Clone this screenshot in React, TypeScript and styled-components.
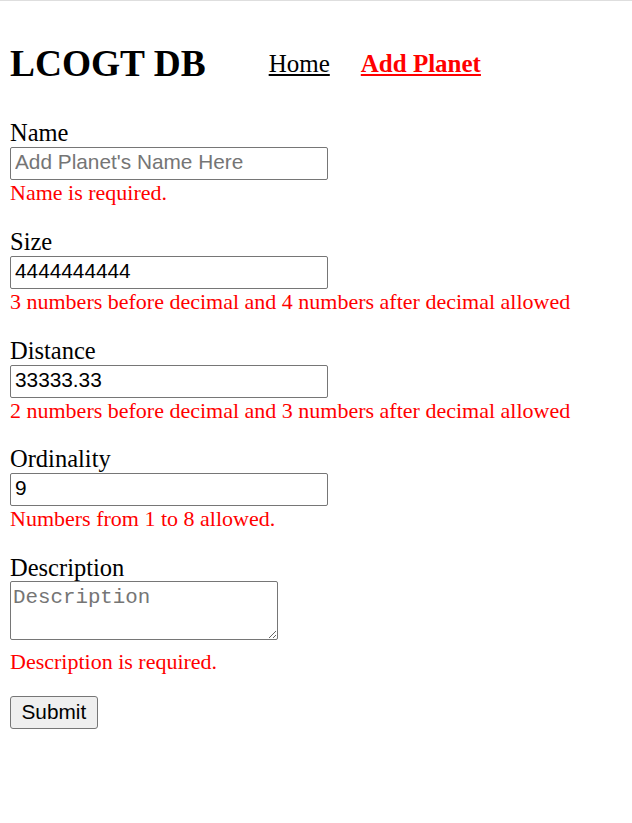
import React from "react";
import styled, { createGlobalStyle } from "styled-components";

const GlobalStyle = createGlobalStyle`
  html, body {
    margin: 0;
    padding: 0;
    background: #ffffff;
  }
  body {
    font-family: "Liberation Serif", "Times New Roman", serif;
    color: #000000;
  }
`;

const Page = styled.div`
  border-top: 1px solid #dedede;
  padding: 0 10px 40px;
`;

const Header = styled.header`
  display: flex;
  align-items: center;
  gap: 63px;
  padding-top: 42px;
`;

const Title = styled.h1`
  margin: 0;
  font-size: 37.4px;
  line-height: 42px;
  font-weight: 700;
`;

const Nav = styled.nav`
  display: flex;
  align-items: center;
  gap: 31px;
`;

const NavLink = styled.a<{ $active?: boolean }>`
  font-size: 25px;
  line-height: 30px;
  color: ${(p) => (p.$active ? "#ff0000" : "#000000")};
  font-weight: ${(p) => (p.$active ? 700 : 400)};
  text-decoration: underline;
  cursor: pointer;
`;

const Form = styled.form`
  display: flex;
  flex-direction: column;
  align-items: flex-start;
  gap: 20.2px;
  margin-top: 33px;
`;

const Field = styled.div`
  display: flex;
  flex-direction: column;
  align-items: flex-start;
`;

const Label = styled.label`
  font-size: 24.5px;
  line-height: 29px;
`;

const TextInput = styled.input`
  box-sizing: border-box;
  width: 318px;
  height: 33px;
  margin: 0;
  padding: 0 4px 3px;
  border: 1px solid #767676;
  border-radius: 2px;
  background: #ffffff;
  color: #000000;
  font-family: "Liberation Sans", Arial, sans-serif;
  font-size: 20.8px;
  outline: none;
  &::placeholder {
    color: #757575;
  }
`;

const TextArea = styled.textarea`
  box-sizing: border-box;
  display: block;
  width: 268px;
  height: 59px;
  margin: -1px 0 9px;
  padding: 4px 2px;
  border: 1px solid #767676;
  border-radius: 2px;
  background: #ffffff;
  color: #000000;
  font-family: "Liberation Mono", "Courier New", monospace;
  font-size: 20.8px;
  outline: none;
  &::placeholder {
    color: #757575;
  }
`;

const ErrorText = styled.div`
  color: #ff0000;
  font-size: 22px;
  line-height: 26.6px;
`;

const SubmitButton = styled.button`
  box-sizing: border-box;
  height: 33px;
  margin: 0;
  padding: 0 10.5px;
  border: 1px solid #767676;
  border-radius: 3px;
  background: #efefef;
  color: #000000;
  font-family: "Liberation Sans", Arial, sans-serif;
  font-size: 20.8px;
  cursor: pointer;
`;

type FieldDef = {
  id: string;
  label: string;
  placeholder?: string;
  value?: string;
  error: string;
};

const fields: FieldDef[] = [
  { id: "name", label: "Name", placeholder: "Add Planet's Name Here", error: "Name is required." },
  { id: "size", label: "Size", value: "4444444444", error: "3 numbers before decimal and 4 numbers after decimal allowed" },
  { id: "distance", label: "Distance", value: "33333.33", error: "2 numbers before decimal and 3 numbers after decimal allowed" },
  { id: "ordinality", label: "Ordinality", value: "9", error: "Numbers from 1 to 8 allowed." },
];

export default function App() {
  return (
    <>
      <GlobalStyle />
      <Page>
        <Header>
          <Title>LCOGT DB</Title>
          <Nav>
            <NavLink href="#">Home</NavLink>
            <NavLink href="#" $active>
              Add Planet
            </NavLink>
          </Nav>
        </Header>
        <Form onSubmit={(e) => e.preventDefault()}>
          {fields.map((f) => (
            <Field key={f.id}>
              <Label htmlFor={f.id}>{f.label}</Label>
              <TextInput id={f.id} type="text" placeholder={f.placeholder} defaultValue={f.value} />
              <ErrorText>{f.error}</ErrorText>
            </Field>
          ))}
          <Field>
            <Label htmlFor="description">Description</Label>
            <TextArea id="description" placeholder="Description" />
            <ErrorText>Description is required.</ErrorText>
          </Field>
          <SubmitButton type="submit">Submit</SubmitButton>
        </Form>
      </Page>
    </>
  );
}
